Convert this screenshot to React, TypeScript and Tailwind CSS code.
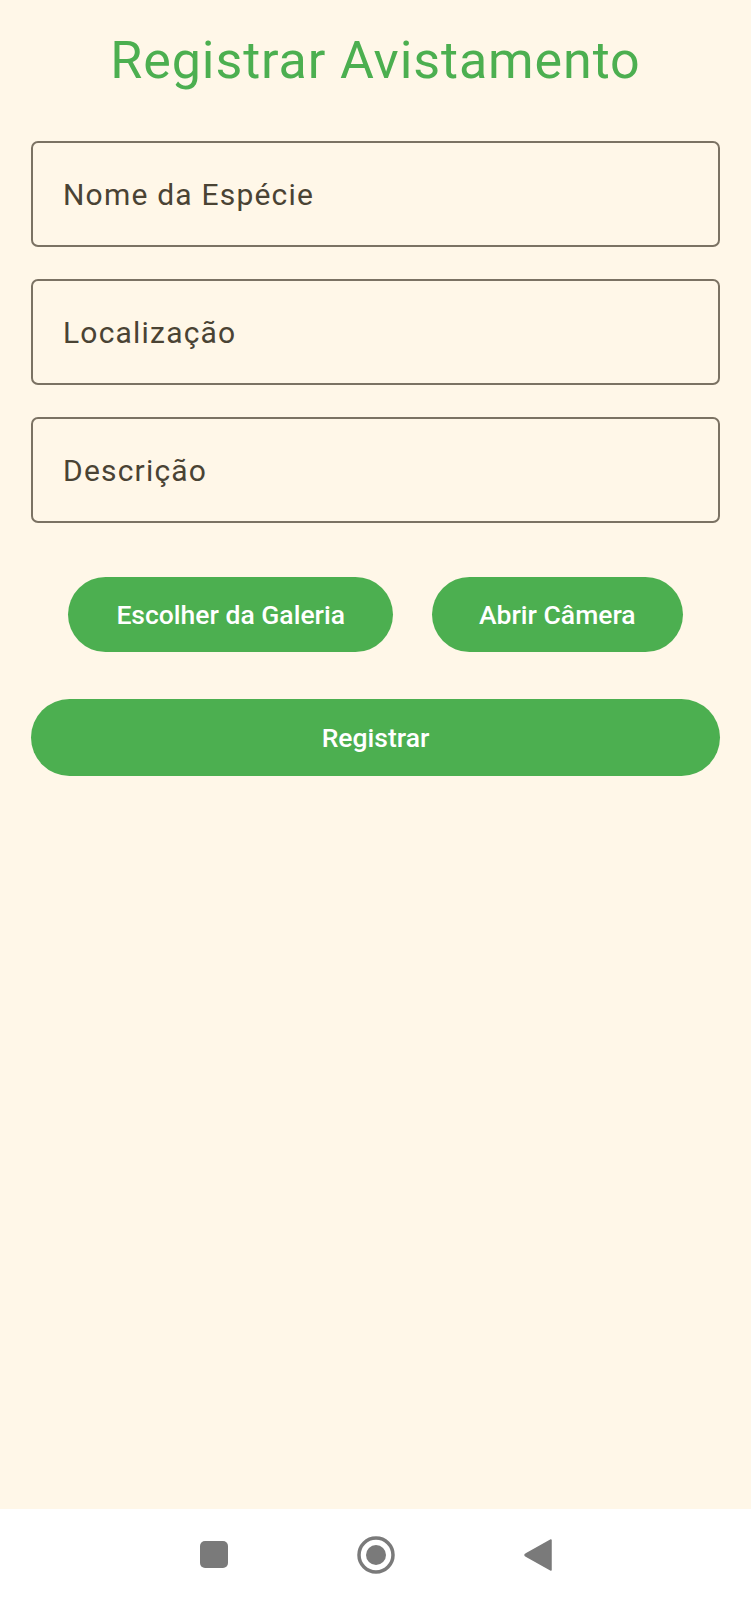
import React from 'react';

const fields = ['Nome da Espécie', 'Localização', 'Descrição'];

const App: React.FC = () => {
  return (
    <div
      className="w-[751px] h-[1600px] flex flex-col bg-[#fff7e8]"
      style={{ fontFamily: 'Roboto, "Noto Sans", sans-serif' }}
    >
      <main className="flex-1 flex flex-col px-[31px]">
        {/* Title */}
        <h1 className="mt-[29px] text-center text-[52px] leading-[64px] tracking-[0.9px] font-normal text-[#4caf50]">
          Registrar Avistamento
        </h1>

        {/* Form fields */}
        <div className="mt-[48px] flex flex-col gap-[32px]">
          {fields.map((label) => (
            <div
              key={label}
              className="h-[106px] flex items-center px-[30px] border-2 border-[#7b7263] rounded-[7px]"
            >
              <span className="text-[30px] tracking-[1.2px] text-[#4a4334]">{label}</span>
            </div>
          ))}
        </div>

        {/* Photo buttons */}
        <div className="mt-[54px] flex justify-center gap-[39px]">
          <button className="h-[75px] px-[48px] rounded-full bg-[#4caf50] text-white text-[26.5px] font-medium">
            Escolher da Galeria
          </button>
          <button className="h-[75px] px-[47px] rounded-full bg-[#4caf50] text-white text-[26.5px] font-medium">
            Abrir Câmera
          </button>
        </div>

        <button className="mt-[47px] h-[77px] w-full rounded-full bg-[#4caf50] text-white text-[26.5px] font-medium">
          Registrar
        </button>
      </main>

      {/* Android navigation bar */}
      <nav className="h-[91px] bg-white flex items-center justify-center gap-[129px]">
        <div className="w-[28px] h-[27px] rounded-[5px] bg-[#7a7a7a]" />
        <svg width="38" height="38" viewBox="0 0 38 38">
          <circle cx="19" cy="19" r="17" fill="none" stroke="#7a7a7a" strokeWidth="3.5" />
          <circle cx="19" cy="19" r="10" fill="#7a7a7a" />
        </svg>
        <svg width="28" height="32" viewBox="0 0 28 32">
          <path d="M27 1 L27 31 L2 17 Q0 16 2 15 Z" fill="#7a7a7a" strokeLinejoin="round" stroke="#7a7a7a" strokeWidth="1.5" />
        </svg>
      </nav>
    </div>
  );
};

export default App;
